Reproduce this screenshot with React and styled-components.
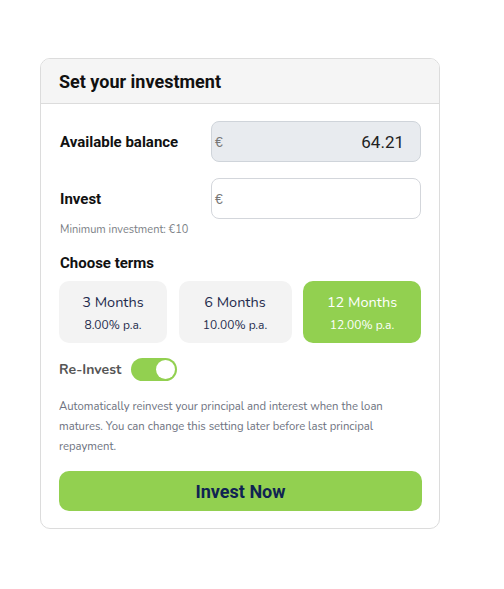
import React, { useState } from "react";
import styled, { createGlobalStyle } from "styled-components";

const GlobalStyle = createGlobalStyle`
  html, body { margin: 0; padding: 0; background: #fff; }
  body { font-family: "Nunito", "Lato", "Noto Sans", sans-serif; }
  * { box-sizing: border-box; }
`;

const Page = styled.div`
  padding: 58px 0 0 40px;
`;

const Card = styled.div`
  width: 400px;
  border: 1px solid #dcdcdc;
  border-radius: 10px;
  overflow: hidden;
  background: #fff;
`;

const Header = styled.div`
  height: 45px;
  background: #f5f5f5;
  border-bottom: 1px solid #dcdcdc;
  display: flex;
  align-items: center;
  padding-left: 18px;
  h2 {
    margin: 0;
    font-family: Roboto, sans-serif;
    font-weight: 700;
    font-size: 18px;
    color: #111;
  }
`;

const Body = styled.div`
  padding: 17px 17px 17px 18px;
  display: flex;
  flex-direction: column;
`;

const Row = styled.div`
  display: grid;
  grid-template-columns: 152px 210px;
  align-items: center;
  margin-bottom: ${(p) => p.$mb || 0}px;
`;

const Label = styled.div`
  font-family: Roboto, sans-serif;
  font-weight: 700;
  font-size: 15px;
  color: #111;
  padding-left: 1px;
`;

const Field = styled.div`
  height: 41px;
  border: 1px solid ${(p) => (p.$disabled ? "#cfd4da" : "#d3d6db")};
  background: ${(p) => (p.$disabled ? "#e8ebef" : "#fff")};
  border-radius: 8px;
  display: flex;
  align-items: center;
  padding: 0 16px 0 3px;
  span {
    font-family: "Liberation Sans", sans-serif;
    font-size: 14px;
    color: #777;
  }
  input {
    flex: 1;
    min-width: 0;
    width: 100%;
    border: none;
    outline: none;
    background: transparent;
    text-align: right;
    font-family: Roboto, sans-serif;
    font-size: 17px;
    color: #222;
    padding: 0;
  }
`;

const Hint = styled.div`
  font-size: 11px;
  color: #7c7f86;
  margin: 3px 0 0 1px;
`;

const Section = styled.div`
  font-family: Roboto, sans-serif;
  font-weight: 700;
  font-size: 15px;
  color: #111;
  margin: 17px 0 9px 1px;
`;

const Terms = styled.div`
  display: grid;
  grid-template-columns: 108fr 113fr 118fr;
  gap: 11.5px;
  width: 362px;
`;

const Term = styled.button`
  height: 62px;
  border: none;
  border-radius: 10px;
  background: ${(p) => (p.$active ? "#92d050" : "#f3f3f3")};
  color: ${(p) => (p.$active ? "#fff" : "#1f2b4d")};
  font-family: inherit;
  display: flex;
  flex-direction: column;
  align-items: center;
  justify-content: center;
  gap: 5px;
  cursor: pointer;
  padding: 0;
  strong {
    font-weight: 400;
    font-size: 14.5px;
  }
  small {
    font-size: 12px;
  }
`;

const ToggleRow = styled.div`
  display: flex;
  align-items: center;
  gap: 10px;
  margin: 15px 0 0 0;
`;

const ToggleLabel = styled.span`
  font-weight: 700;
  font-size: 14px;
  color: #555;
`;

const Switch = styled.button`
  width: 46px;
  height: 23px;
  border-radius: 12px;
  border: none;
  padding: 2px;
  background: ${(p) => (p.$on ? "#92d050" : "#ccc")};
  display: flex;
  justify-content: ${(p) => (p.$on ? "flex-end" : "flex-start")};
  cursor: pointer;
  span {
    width: 19px;
    height: 19px;
    border-radius: 50%;
    background: #fff;
  }
`;

const Note = styled.p`
  margin: 16px 0 0 0;
  font-size: 11.3px;
  line-height: 20px;
  color: #6d7280;
  width: 355px;
`;

const Submit = styled.button`
  margin: 14px 0 0 0;
  width: 363px;
  height: 40px;
  border: none;
  border-radius: 10px;
  background: #92d050;
  color: #0f2352;
  font-family: Roboto, sans-serif;
  font-weight: 700;
  font-size: 18px;
  cursor: pointer;
`;

const terms = [
  { months: 3, rate: "8.00" },
  { months: 6, rate: "10.00" },
  { months: 12, rate: "12.00" },
];

export default function App() {
  const [selected, setSelected] = useState(12);
  const [reinvest, setReinvest] = useState(true);

  return (
    <Page>
      <GlobalStyle />
      <Card>
        <Header>
          <h2>Set your investment</h2>
        </Header>
        <Body>
          <Row $mb={16}>
            <Label>Available balance</Label>
            <Field $disabled>
              <span>€</span>
              <input value="64.21" readOnly />
            </Field>
          </Row>
          <Row>
            <Label>Invest</Label>
            <Field>
              <span>€</span>
              <input />
            </Field>
          </Row>
          <Hint>Minimum investment: €10</Hint>
          <Section>Choose terms</Section>
          <Terms>
            {terms.map((t) => (
              <Term
                key={t.months}
                $active={selected === t.months}
                onClick={() => setSelected(t.months)}
              >
                <strong>{t.months} Months</strong>
                <small>{t.rate}% p.a.</small>
              </Term>
            ))}
          </Terms>
          <ToggleRow>
            <ToggleLabel>Re-Invest</ToggleLabel>
            <Switch $on={reinvest} onClick={() => setReinvest(!reinvest)}>
              <span />
            </Switch>
          </ToggleRow>
          <Note>
            Automatically reinvest your principal and interest when the loan
            matures. You can change this setting later before last principal
            repayment.
          </Note>
          <Submit>Invest Now</Submit>
        </Body>
      </Card>
    </Page>
  );
}
